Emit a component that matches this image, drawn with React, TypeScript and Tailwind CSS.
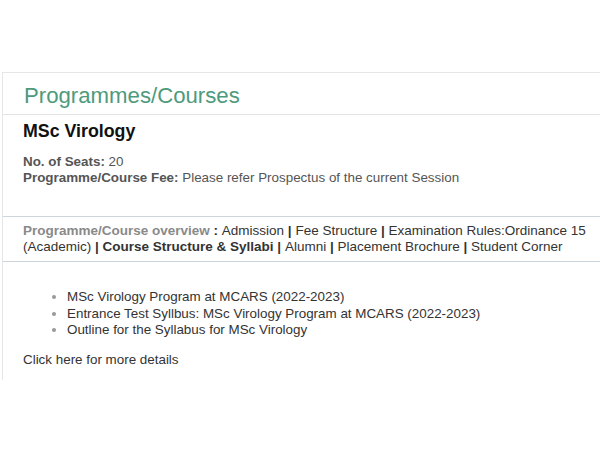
export default function App() {
  return (
    <div className="w-[600px] h-[450px] bg-white overflow-hidden" style={{ fontFamily: '"Liberation Sans", Arial, sans-serif' }}>
      <div className="mt-[72px] ml-[2px] border-l border-t border-[#e6e6e6] h-[308px]">
        <div className="h-[42px] border-b border-[#e4e4e4] pl-[21px] pt-[10px]">
          <div className="text-[22.2px] leading-[26px] text-[#4e9a7c]">Programmes/Courses</div>
        </div>
        <div className="pl-[20px] pt-[5px]">
          <div className="text-[17.8px] leading-[22px] font-bold text-[#111]">MSc Virology</div>
          <div className="mt-[12px] text-[13.4px] leading-[16px] text-[#555]">
            <div><b>No. of Seats:</b> 20</div>
            <div><b>Programme/Course Fee:</b> Please refer Prospectus of the current Session</div>
          </div>
        </div>
        <div className="mt-[30px] border-t border-b border-[#cdd5dd] pl-[20px] pt-[6px] pb-[6px] text-[13.5px] leading-[16px] text-[#333]">
          <span className="font-bold text-[#8a8a8a]">Programme/Course overview</span><b> : </b>Admission<b> | </b>Fee Structure<b> | </b>Examination Rules:Ordinance 15 (Academic)<b> | Course Structure &amp; Syllabi | </b>Alumni<b> | </b>Placement Brochure<b> | </b>Student Corner
        </div>
        <ul className="mt-[27px] pl-[64px] text-[13.4px] leading-[16.5px] text-[#333] list-disc marker:text-[#999]">
          <li>MSc Virology Program at MCARS (2022-2023)</li>
          <li>Entrance Test Syllbus: MSc Virology Program at MCARS (2022-2023)</li>
          <li>Outline for the Syllabus for MSc Virology</li>
        </ul>
        <div className="mt-[13px] pl-[20px] text-[13.4px] leading-[16px] text-[#333]">Click here for more details</div>
      </div>
    </div>
  );
}
